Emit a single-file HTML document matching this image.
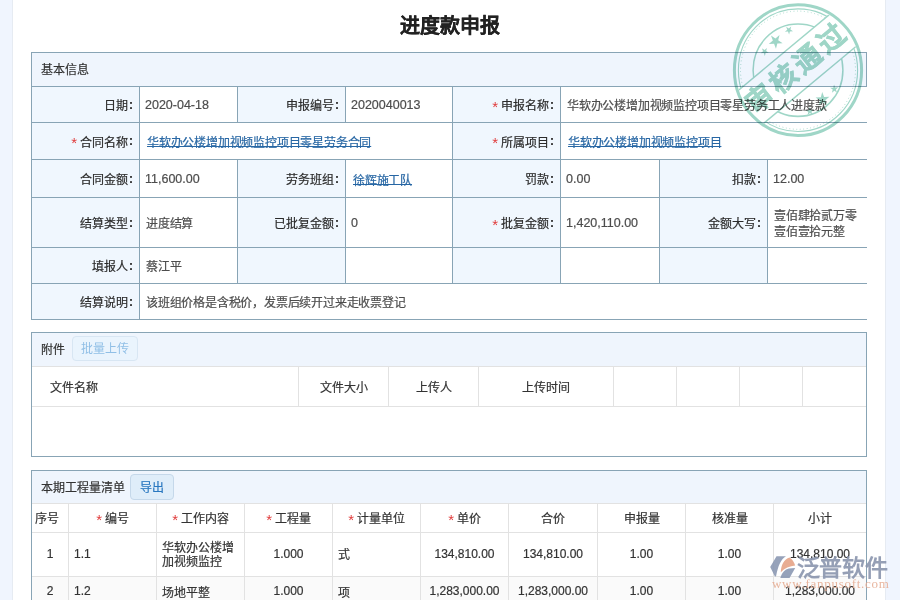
<!DOCTYPE html>
<html lang="zh-CN"><head><meta charset="utf-8">
<style>
*{box-sizing:border-box;margin:0;padding:0}
html,body{width:900px;height:600px;overflow:hidden;background:#fff;font-family:"Liberation Sans",sans-serif;font-size:12px;color:#333}
.box,.title{-webkit-text-stroke:0.2px currentColor}
.strip{position:absolute;top:0;height:600px;background:#f0f5fe}
#sl{left:0;width:13px;border-right:1px solid #e6ebf2}
#sr{left:885px;width:15px;border-left:1px solid #e6ebf2}
.title{position:absolute;left:0;width:900px;top:13px;text-align:center;font-size:20px;font-weight:bold;color:#222;line-height:26px}
.box{position:absolute;left:31px;width:836px;border:1px solid #88a4b5;background:#fff}
.c{position:absolute;display:flex;align-items:center;border-right:1px solid #88a4b5;border-bottom:1px solid #88a4b5;white-space:nowrap}
.l{background:#f0f7fe;justify-content:flex-end;padding-right:6px;color:#2b2b2b}
.v{background:#fff;padding-left:6px;color:#4d4d4d;letter-spacing:-0.2px}
.n{font-size:12.5px;letter-spacing:0;margin-left:-1px}
a{position:relative;top:0.5px;margin-left:1px;text-underline-offset:-1px}
.co{font-style:normal;font-weight:bold;margin-left:1.5px}
.req{color:#e03a3a;margin-right:2.5px;position:relative;top:1.5px;font-size:15px;-webkit-text-stroke:0}
a{color:#2867a4;text-decoration:underline}
.hd{position:absolute;left:0;top:0;width:834px;background:#eff5fd;display:flex;align-items:center;padding-left:9px;color:#333}
.g{position:absolute;display:flex;align-items:center;justify-content:center;border-right:1px solid #e2e2e2;border-bottom:1px solid #e2e2e2;white-space:nowrap;color:#333}
.btn{display:inline-block;border:1px solid #cfe3f5;background:#e6f2fc;border-radius:4px;text-align:center}
</style></head><body>
<div class="strip" id="sl"></div>
<div class="strip" id="sr"></div>
<div class="title">进度款申报</div>

<!-- section 1 -->
<div class="box" style="top:52px;height:268px">
  <div class="hd" style="height:34px;border-bottom:1px solid #88a4b5;padding-bottom:2px">基本信息</div>
  <!-- row1 86-122 -->
  <div class="c l" style="left:0;top:34px;width:108px;height:36px">日期<i class="co">:</i></div>
  <div class="c v" style="left:108px;top:34px;width:98px;height:36px"><span class="n">2020-04-18</span></div>
  <div class="c l" style="left:206px;top:34px;width:108px;height:36px">申报编号<i class="co">:</i></div>
  <div class="c v" style="left:314px;top:34px;width:107px;height:36px"><span class="n">2020040013</span></div>
  <div class="c l" style="left:421px;top:34px;width:108px;height:36px"><span class="req">*</span>申报名称<i class="co">:</i></div>
  <div class="c v" style="left:529px;top:34px;width:306px;height:36px;border-right:0">华软办公楼增加视频监控项目零星劳务工人进度款</div>
  <!-- row2 122-159 -->
  <div class="c l" style="left:0;top:70px;width:108px;height:37px"><span class="req">*</span>合同名称<i class="co">:</i></div>
  <div class="c v" style="left:108px;top:70px;width:313px;height:37px"><a>华软办公楼增加视频监控项目零星劳务合同</a></div>
  <div class="c l" style="left:421px;top:70px;width:108px;height:37px"><span class="req">*</span>所属项目<i class="co">:</i></div>
  <div class="c v" style="left:529px;top:70px;width:306px;height:37px;border-right:0"><a>华软办公楼增加视频监控项目</a></div>
  <!-- row3 159-197 -->
  <div class="c l" style="left:0;top:107px;width:108px;height:38px">合同金额<i class="co">:</i></div>
  <div class="c v" style="left:108px;top:107px;width:98px;height:38px"><span class="n">11,600.00</span></div>
  <div class="c l" style="left:206px;top:107px;width:108px;height:38px">劳务班组<i class="co">:</i></div>
  <div class="c v" style="left:314px;top:107px;width:107px;height:38px"><a>徐辉施工队</a></div>
  <div class="c l" style="left:421px;top:107px;width:108px;height:38px">罚款<i class="co">:</i></div>
  <div class="c v" style="left:529px;top:107px;width:99px;height:38px"><span class="n">0.00</span></div>
  <div class="c l" style="left:628px;top:107px;width:108px;height:38px">扣款<i class="co">:</i></div>
  <div class="c v" style="left:736px;top:107px;width:99px;height:38px;border-right:0"><span class="n">12.00</span></div>
  <!-- row4 197-247 -->
  <div class="c l" style="left:0;top:145px;width:108px;height:50px">结算类型<i class="co">:</i></div>
  <div class="c v" style="left:108px;top:145px;width:98px;height:50px">进度结算</div>
  <div class="c l" style="left:206px;top:145px;width:108px;height:50px">已批复金额<i class="co">:</i></div>
  <div class="c v" style="left:314px;top:145px;width:107px;height:50px"><span class="n">0</span></div>
  <div class="c l" style="left:421px;top:145px;width:108px;height:50px"><span class="req">*</span>批复金额<i class="co">:</i></div>
  <div class="c v" style="left:529px;top:145px;width:99px;height:50px"><span class="n">1,420,110.00</span></div>
  <div class="c l" style="left:628px;top:145px;width:108px;height:50px">金额大写<i class="co">:</i></div>
  <div class="c v" style="left:736px;top:145px;width:99px;height:50px;border-right:0;white-space:normal;line-height:15.5px;padding-top:4px">壹佰肆拾贰万零<br>壹佰壹拾元整</div>
  <!-- row5 247-284 -->
  <div class="c l" style="left:0;top:195px;width:108px;height:36px">填报人<i class="co">:</i></div>
  <div class="c v" style="left:108px;top:195px;width:98px;height:36px">蔡江平</div>
  <div class="c l" style="left:206px;top:195px;width:108px;height:36px"></div>
  <div class="c v" style="left:314px;top:195px;width:107px;height:36px"></div>
  <div class="c l" style="left:421px;top:195px;width:108px;height:36px"></div>
  <div class="c v" style="left:529px;top:195px;width:99px;height:36px"></div>
  <div class="c l" style="left:628px;top:195px;width:108px;height:36px"></div>
  <div class="c v" style="left:736px;top:195px;width:99px;height:36px;border-right:0"></div>
  <!-- row6 284-319 -->
  <div class="c l" style="left:0;top:231px;width:108px;height:35px;border-bottom:0">结算说明<i class="co">:</i></div>
  <div class="c v" style="left:108px;top:231px;width:727px;height:35px;border-bottom:0;border-right:0">该班组价格是含税价，发票后续开过来走收票登记</div>
</div>

<!-- section 2 -->
<div class="box" style="top:332px;height:125px">
  <div class="hd" style="height:34px;border-bottom:1px solid #e2e2e2;padding-bottom:2px">附件<span class="btn" style="margin-left:7px;width:66px;height:25px;line-height:24px;color:#90bfe6;border-color:#d8e6f3;background:#eaf4fd;-webkit-text-stroke:0">批量上传</span></div>
  <div class="g" style="left:0;top:34px;width:267px;height:40px;justify-content:flex-start;padding-left:18px">文件名称</div>
  <div class="g" style="left:267px;top:34px;width:90px;height:40px">文件大小</div>
  <div class="g" style="left:357px;top:34px;width:90px;height:40px">上传人</div>
  <div class="g" style="left:447px;top:34px;width:135px;height:40px">上传时间</div>
  <div class="g" style="left:582px;top:34px;width:63px;height:40px"></div>
  <div class="g" style="left:645px;top:34px;width:63px;height:40px"></div>
  <div class="g" style="left:708px;top:34px;width:63px;height:40px"></div>
  <div class="g" style="left:771px;top:34px;width:63px;height:40px;border-right:0"></div>
</div>

<!-- section 3 -->
<div class="box" style="top:470px;height:160px;border-bottom:0">
  <div class="hd" style="height:33px;border-bottom:1px solid #e2e2e2;padding-bottom:1px">本期工程量清单<span class="btn" style="margin-left:5px;width:44px;height:26px;line-height:26px;color:#2a78c0;background:#dfedf9;border-color:#c5d8ea">导出</span></div>
  <div class="g" style="left:0px;top:33px;width:37px;height:29px;padding-right:6px;padding-bottom:2px">序号</div>
  <div class="g" style="left:37px;top:33px;width:88px;height:29px;padding-bottom:1px"><span class="req">*</span>编号</div>
  <div class="g" style="left:125px;top:33px;width:88px;height:29px;padding-bottom:1px"><span class="req">*</span>工作内容</div>
  <div class="g" style="left:213px;top:33px;width:88px;height:29px;padding-bottom:1px"><span class="req">*</span>工程量</div>
  <div class="g" style="left:301px;top:33px;width:88px;height:29px;padding-bottom:1px"><span class="req">*</span>计量单位</div>
  <div class="g" style="left:389px;top:33px;width:88px;height:29px;padding-bottom:1px"><span class="req">*</span>单价</div>
  <div class="g" style="left:477px;top:33px;width:89px;height:29px;padding-bottom:1px">合价</div>
  <div class="g" style="left:566px;top:33px;width:88px;height:29px;padding-bottom:1px">申报量</div>
  <div class="g" style="left:654px;top:33px;width:88px;height:29px;padding-bottom:1px">核准量</div>
  <div class="g" style="left:742px;top:33px;width:92px;height:29px;padding-bottom:1px;border-right:0">小计</div>
  <div class="g" style="left:0px;top:62px;padding-bottom:2px;width:37px;height:44px;background:#fff">1</div>
  <div class="g" style="left:37px;top:62px;padding-bottom:2px;width:88px;height:44px;background:#fff;justify-content:flex-start;padding-left:5px">1.1</div>
  <div class="g" style="left:125px;top:62px;padding-bottom:2px;width:88px;height:44px;background:#fff;justify-content:flex-start;padding-left:5px;white-space:normal;line-height:13.5px;padding-bottom:0;padding-top:2px">华软办公楼增<br>加视频监控</div>
  <div class="g" style="left:213px;top:62px;padding-bottom:2px;width:88px;height:44px;background:#fff">1.000</div>
  <div class="g" style="left:301px;top:62px;padding-bottom:2px;width:88px;height:44px;background:#fff;justify-content:flex-start;padding-left:5px">式</div>
  <div class="g" style="left:389px;top:62px;padding-bottom:2px;width:88px;height:44px;background:#fff">134,810.00</div>
  <div class="g" style="left:477px;top:62px;padding-bottom:2px;width:89px;height:44px;background:#fff">134,810.00</div>
  <div class="g" style="left:566px;top:62px;padding-bottom:2px;width:88px;height:44px;background:#fff">1.00</div>
  <div class="g" style="left:654px;top:62px;padding-bottom:2px;width:88px;height:44px;background:#fff">1.00</div>
  <div class="g" style="left:742px;top:62px;padding-bottom:2px;width:92px;height:44px;background:#fff;border-right:0">134,810.00</div>
  <div class="g" style="left:0px;top:106px;width:37px;height:29px;background:#fafafa">2</div>
  <div class="g" style="left:37px;top:106px;width:88px;height:29px;background:#fafafa;justify-content:flex-start;padding-left:5px">1.2</div>
  <div class="g" style="left:125px;top:106px;width:88px;height:29px;background:#fafafa;justify-content:flex-start;padding-left:5px">场地平整</div>
  <div class="g" style="left:213px;top:106px;width:88px;height:29px;background:#fafafa">1.000</div>
  <div class="g" style="left:301px;top:106px;width:88px;height:29px;background:#fafafa;justify-content:flex-start;padding-left:5px">项</div>
  <div class="g" style="left:389px;top:106px;width:88px;height:29px;background:#fafafa">1,283,000.00</div>
  <div class="g" style="left:477px;top:106px;width:89px;height:29px;background:#fafafa">1,283,000.00</div>
  <div class="g" style="left:566px;top:106px;width:88px;height:29px;background:#fafafa">1.00</div>
  <div class="g" style="left:654px;top:106px;width:88px;height:29px;background:#fafafa">1.00</div>
  <div class="g" style="left:742px;top:106px;width:92px;height:29px;background:#fafafa;border-right:0">1,283,000.00</div>
</div>

<svg style="position:absolute;left:0;top:0;mix-blend-mode:multiply" width="900" height="600" viewBox="0 0 900 600">
  <defs>
    <mask id="bandmask">
      <rect x="-100" y="-100" width="200" height="200" fill="#fff"/>
      <rect x="-80" y="-22.3" width="160" height="41" fill="#000" transform="rotate(-39)"/>
    </mask>
    <clipPath id="inner"><circle cx="0" cy="0" r="62"/></clipPath>
    <path id="star" d="M0,-1 L0.2245,-0.309 L0.951,-0.309 L0.363,0.118 L0.588,0.809 L0,0.382 L-0.588,0.809 L-0.363,0.118 L-0.951,-0.309 L-0.2245,-0.309Z"/>
  </defs>
  <g transform="translate(798 70.2) scale(1 1.028)">
  <g fill="none" stroke="#9fd6c7">
    <circle cx="0" cy="0" r="63.6" stroke-width="3"/>
    <circle cx="0" cy="0" r="59.6" stroke-width="1.1" mask="url(#bandmask)"/>
    <circle cx="0" cy="0" r="57.5" stroke-width="0.9" stroke-dasharray="0.9 2.6" mask="url(#bandmask)"/>
    <circle cx="0" cy="0" r="44.9" stroke-width="1.5" mask="url(#bandmask)"/>
  </g>
  <g transform="rotate(-39)" fill="#9fd6c7">
    <g clip-path="url(#inner)" stroke="#9fd6c7" stroke-width="1.4">
      <line x1="-70" y1="-22.3" x2="70" y2="-22.3"/>
      <line x1="-70" y1="18.6" x2="70" y2="18.6"/>
    </g>
    <use href="#star" transform="translate(0.3 -36) scale(7.3)"/>
    <use href="#star" transform="translate(-14.6 -35) scale(4.3)"/>
    <use href="#star" transform="translate(17.4 -36) scale(4.3)"/>
    <use href="#star" transform="translate(1.2 37.6) scale(7.3) rotate(180)"/>
    <use href="#star" transform="translate(-16 38.6) scale(4.3) rotate(180)"/>
    <use href="#star" transform="translate(16.7 37) scale(4.3) rotate(180)"/>
    <text x="1" y="6.5" text-anchor="middle" font-family="Liberation Sans, sans-serif" font-weight="bold" font-size="27" letter-spacing="4.3" stroke="#9fd6c7" stroke-width="0.6">审核通过</text>
  </g>
  </g>
</svg>

<svg style="position:absolute;left:765px;top:550px;opacity:0.9" width="135" height="50" viewBox="0 0 135 50">
  <path d="M5.2,17 L11.5,6.2 L21,6.2 C16,9 13.2,15 11,26.6 L9.8,26.2 Z" fill="#8b98b3"/>
  <path d="M15.8,22.2 C16,14.5 19,9.2 24.6,7.4 C27.3,9.2 29.3,12.2 30.2,15.6 C24.8,16 19.5,18.2 15.8,22.2 Z" fill="#e6a487"/>
  <path d="M15.3,28.1 C17,22.5 20,19.4 23.8,18.6 L30.2,18 L24.6,28.1 Z" fill="#8b98b3"/>
  <text x="31.5" y="25.6" font-family="Liberation Sans, sans-serif" font-weight="bold" font-size="23" fill="#8a95ae" letter-spacing="-0.2">泛普软件</text>
  <text x="7" y="37.5" font-family="Liberation Serif, serif" font-size="13" fill="#e6ae95" letter-spacing="0.72">www.fanpusoft.com</text>
</svg>
</body></html>
